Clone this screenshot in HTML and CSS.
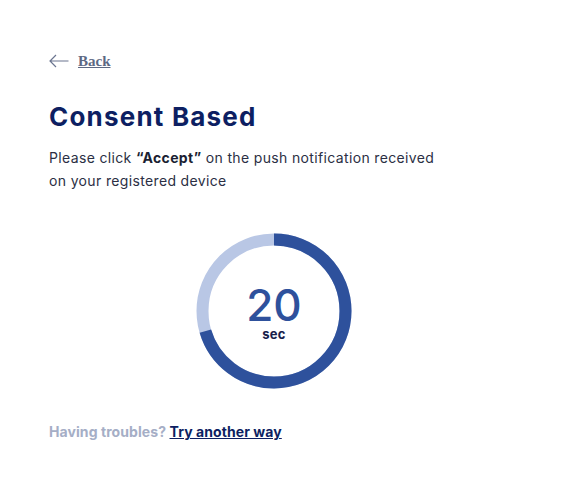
FILE: index.html
```html
<!DOCTYPE html>
<html lang="en">
  <head>
    <meta charset="UTF-8" />
    <meta name="viewport" content="width=device-width, initial-scale=1.0" />
    <title>Consent Based</title>
    <link rel="stylesheet" href="styles.css">
  </head>
  <body>
    <div class="container">
      <a class="back" href="#">
        <svg class="back-arrow" width="20" height="14" viewBox="0 0 20 14">
          <path d="M19.5 7H1M7 1L1 7l6 6" fill="none" stroke="#6b7590" stroke-width="1.2" />
        </svg>
        <span>Back</span>
      </a>
      <h1 class="title">Consent Based</h1>
      <p class="desc">Please click <b>“Accept”</b> on the push notification received on your registered device</p>
      <div class="timer">
        <svg class="ring" width="156" height="156" viewBox="0 0 156 156">
          <circle cx="78" cy="78" r="71.5" fill="none" stroke="#b9c7e5" stroke-width="12" />
          <circle cx="78" cy="78" r="71.5" fill="none" stroke="#2e519c" stroke-width="12"
            stroke-dasharray="316 1000" transform="rotate(-90 78 78)" />
        </svg>
        <div class="count">
          <span class="num">20</span>
          <span class="unit">sec</span>
        </div>
      </div>
      <p class="help">Having troubles? <a href="#">Try another way</a></p>
    </div>
  </body>
</html>
```
FILE: styles.css
```css
* {
  padding: 0;
  margin: 0;
  box-sizing: border-box;
}
body {
  background: #fff;
  font-family: Inter, "Noto Sans", sans-serif;
}
.container {
  width: 450px;
  margin-left: 49px;
  padding-top: 52px;
}
.back {
  display: flex;
  align-items: center;
  gap: 9px;
  height: 18px;
  color: #5d6883;
  text-decoration: underline;
  font-family: "Liberation Serif", serif;
  font-weight: bold;
  font-size: 15px;
}
.title {
  margin-top: 30px;
  font-size: 26px;
  font-weight: 700;
  color: #0d1f62;
  letter-spacing: 1.2px;
  line-height: 34px;
}
.desc {
  margin-top: 12px;
  width: 400px;
  font-size: 14px;
  line-height: 23px;
  letter-spacing: 0.35px;
  color: #2b2f44;
}
.desc b {
  color: #1b1f33;
}
.timer {
  position: relative;
  width: 156px;
  height: 156px;
  margin: 41px auto 0;
}
.ring {
  display: block;
}
.count {
  position: absolute;
  inset: 0;
  display: flex;
  flex-direction: column;
  align-items: center;
  justify-content: center;
  padding-top: 4px;
}
.num {
  font-size: 44px;
  font-weight: 500;
  line-height: 40px;
  color: #2e519c;
}
.unit {
  margin-top: 2px;
  font-size: 13px;
  font-weight: 700;
  letter-spacing: 0.3px;
  color: #17204a;
  line-height: 14px;
}
.help {
  margin-top: 34px;
  font-size: 14px;
  font-weight: 700;
  letter-spacing: 0.08px;
  color: #a5aec6;
}
.help a {
  color: #0d1f62;
}
```
